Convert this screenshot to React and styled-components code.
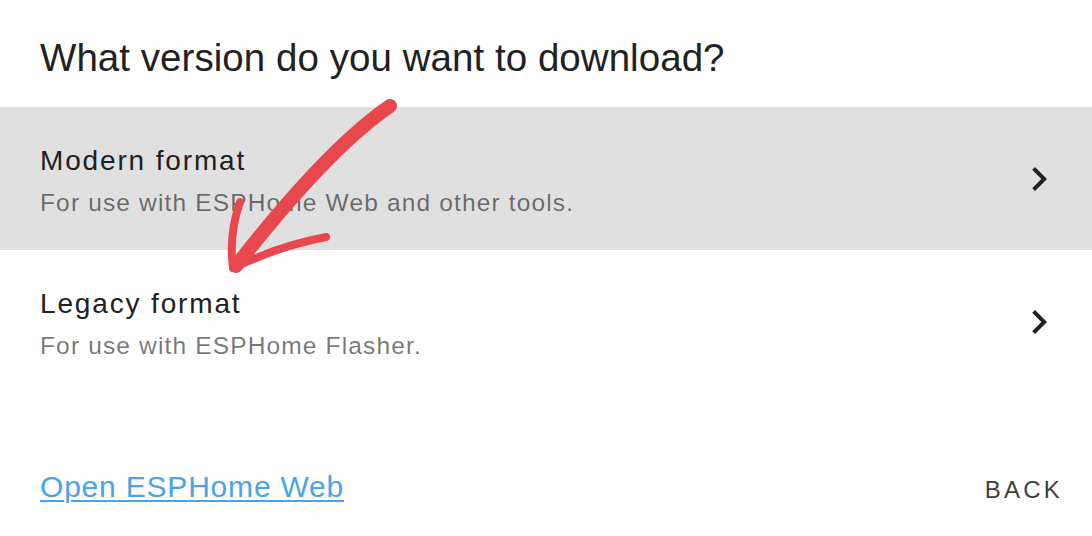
import React from "react";
import styled, { createGlobalStyle } from "styled-components";

const GlobalStyle = createGlobalStyle`
  html, body {
    margin: 0;
    padding: 0;
    background: #fff;
  }
  body {
    font-family: "Liberation Sans", Arial, sans-serif;
    -webkit-font-smoothing: antialiased;
  }
`;

const formats = [
  { title: "Modern format", desc: "For use with ESPHome Web and other tools.", active: true },
  { title: "Legacy format", desc: "For use with ESPHome Flasher.", active: false },
];

const App = () => {
  return (
    <>
      <GlobalStyle />
      <Dialog>
        <Title>What version do you want to download?</Title>

        <List>
          {formats.map((f) => (
            <Item key={f.title} $active={f.active}>
              <ItemText>
                <Primary>{f.title}</Primary>
                <Secondary>{f.desc}</Secondary>
              </ItemText>
              <Chevron viewBox="0 0 24 24">
                <path d="M8.59,16.58L13.17,12L8.59,7.41L10,6L16,12L10,18L8.59,16.58Z" />
              </Chevron>
            </Item>
          ))}
        </List>

        <Footer>
          <Link href="#">Open ESPHome Web</Link>
          <BackButton>BACK</BackButton>
        </Footer>

        {/* hand drawn annotation arrow */}
        <Annotation viewBox="0 0 1092 536">
          <path d="M390,106 C352,132 300,184 236,266" strokeWidth="14" />
          <path d="M240,202 C233,222 230,245 233,268" strokeWidth="8" />
          <path d="M234,268 C258,256 290,244 326,237" strokeWidth="8" />
        </Annotation>
      </Dialog>
    </>
  );
};

const Dialog = styled.div`
  position: relative;
  width: 1092px;
  height: 536px;
  overflow: hidden;
  background: #fff;
`;

const Title = styled.h2`
  margin: 0;
  padding: 34px 40px 25px;
  font-size: 38.5px;
  line-height: 48px;
  font-weight: 400;
  color: #212121;
  letter-spacing: 0.05px;
`;

const List = styled.div`
  display: flex;
  flex-direction: column;
`;

const Item = styled.div`
  display: flex;
  align-items: center;
  justify-content: space-between;
  height: 143px;
  padding: 0 29px 0 40px;
  box-sizing: border-box;
  background: ${(p) => (p.$active ? "#e0e0e0" : "#fff")};
`;

const ItemText = styled.div`
  display: flex;
  flex-direction: column;
  gap: 8px;
  padding-top: 5px;
`;

const Primary = styled.div`
  font-size: 28px;
  line-height: 36px;
  color: #212121;
  letter-spacing: 1.85px;
`;

const Secondary = styled.div`
  font-size: 24.5px;
  line-height: 32px;
  color: rgba(0, 0, 0, 0.54);
  letter-spacing: 1.15px;
`;

const Chevron = styled.svg`
  width: 48px;
  height: 48px;
  fill: #212121;
  flex-shrink: 0;
`;

const Footer = styled.div`
  display: flex;
  align-items: flex-start;
  justify-content: space-between;
  padding: 76px 32px 0 40px;
`;

const Link = styled.a`
  font-size: 30px;
  line-height: 36px;
  color: #4aa3ea;
  letter-spacing: 0.8px;
  text-decoration: underline;
  text-decoration-thickness: 2px;
  text-underline-offset: 3px;
`;

const BackButton = styled.button`
  border: none;
  background: none;
  padding: 3px 0 0;
  font-family: inherit;
  font-size: 24px;
  line-height: 36px;
  letter-spacing: 3.2px;
  margin-right: -3px;
  color: #3f3f3f;
`;

const Annotation = styled.svg`
  position: absolute;
  left: 0;
  top: 0;
  width: 1092px;
  height: 536px;
  pointer-events: none;
  fill: none;
  stroke: #e8474e;
  stroke-linecap: round;
  stroke-linejoin: round;
`;

export default App;
